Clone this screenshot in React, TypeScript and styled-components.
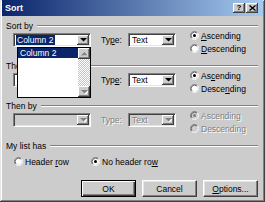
import styled, { createGlobalStyle } from 'styled-components'

const FACE = '#cccccc'
const NAVY = '#0a246a'

const GlobalStyle = createGlobalStyle`
  html, body {
    margin: 0;
    padding: 0;
    background: ${FACE};
  }
  body {
    font-family: "Liberation Sans", Arial, sans-serif;
    font-size: 8.5px;
    color: #000;
  }
`

const Window = styled.div`
  width: 265px;
  height: 202px;
  box-sizing: border-box;
  padding: 0 2px 2px 2px;
  background: ${FACE};
  box-shadow: inset -1px -1px #404040, inset 1px 1px #e4e4e4, inset -2px -2px #808080, inset 2px 2px #fff;
  display: flex;
  flex-direction: column;
`

const TitleBar = styled.div`
  height: 16px;
  flex: none;
  display: flex;
  align-items: center;
  justify-content: space-between;
  padding: 0 5px 0 3px;
  background: linear-gradient(to right, ${NAVY}, #a6caf0);
`

const TitleText = styled.span`
  color: #fff;
  font-weight: bold;
  font-size: 9px;
`

const TitleButtons = styled.div`
  display: flex;
  gap: 1px;
`

const TitleButton = styled.div`
  width: 12px;
  height: 10px;
  box-sizing: border-box;
  background: ${FACE};
  box-shadow: inset -1px -1px #404040, inset 1px 1px #fff, inset -2px -2px #808080;
  display: flex;
  align-items: center;
  justify-content: center;
  font-weight: bold;
  font-size: 8px;
  line-height: 1;
`

const Content = styled.div`
  display: flex;
  flex-direction: column;
  padding: 4px 5px 0 4px;
`

const Section = styled.div`
  display: flex;
  flex-direction: column;
`

const GroupHeader = styled.div`
  height: 12px;
  display: flex;
  align-items: center;
`

const GroupLine = styled.div`
  flex: 1;
  margin-left: 4px;
  border-top: 1px solid #808080;
  border-bottom: 1px solid #fff;
`

const Row = styled.div`
  height: 28px;
  display: flex;
  align-items: flex-start;
  padding-left: 7px;
`

const Field = styled.div`
  display: flex;
  align-items: center;
  margin-top: 1px;
`

const ComboWrap = styled.div`
  position: relative;
`

const Combo = styled.div<{ $width: number; $disabled?: boolean }>`
  width: ${(p) => p.$width}px;
  height: 14px;
  box-sizing: border-box;
  border: 1px solid;
  border-color: #808080 #fff #fff #808080;
  box-shadow: inset 1px 1px #404040, inset -1px -1px #e4e4e4;
  background: ${(p) => (p.$disabled ? FACE : '#fff')};
  display: flex;
  align-items: stretch;
  padding: 1px;
`

const ComboValue = styled.div<{ $disabled?: boolean }>`
  flex: 1;
  display: flex;
  align-items: center;
  padding-left: 2px;
  color: ${(p) => (p.$disabled ? '#808080' : '#000')};
  text-shadow: ${(p) => (p.$disabled ? '1px 1px #fff' : 'none')};
`

const Selected = styled.span`
  background: ${NAVY};
  color: #fff;
  align-self: stretch;
  display: flex;
  align-items: center;
  padding: 0 2px 0 1px;
  margin-left: -1px;
`

const DropButton = styled.div`
  width: 12px;
  flex: none;
  box-sizing: border-box;
  background: ${FACE};
  box-shadow: inset -1px -1px #404040, inset 1px 1px #fff, inset -2px -2px #808080;
  display: flex;
  align-items: center;
  justify-content: center;
`

const Label = styled.span<{ $disabled?: boolean; $width?: number; $offset?: number }>`
  width: ${(p) => (p.$width ? `${p.$width}px` : 'auto')};
  margin-left: ${(p) => p.$offset ?? 0}px;
  white-space: nowrap;
  color: ${(p) => (p.$disabled ? '#808080' : '#000')};
  text-shadow: ${(p) => (p.$disabled ? '1px 1px #fff' : 'none')};
`

const RadioColumn = styled.div`
  display: flex;
  flex-direction: column;
  margin-left: 14px;
  margin-top: -3px;
`

const RadioItem = styled.div<{ $width?: number }>`
  height: 13px;
  width: ${(p) => (p.$width ? `${p.$width}px` : 'auto')};
  display: flex;
  align-items: center;
  gap: 2px;
`

const RadioRow = styled.div`
  display: flex;
  align-items: center;
  margin-top: 3px;
  padding-left: 8px;
`

const ListBox = styled.div`
  position: absolute;
  left: 4px;
  top: 14px;
  width: 74px;
  height: 51px;
  box-sizing: border-box;
  border: 1px solid #000;
  background: #fff;
  display: flex;
  z-index: 2;
`

const ListItems = styled.div`
  flex: 1;
`

const ListItem = styled.div<{ $active?: boolean }>`
  height: 10px;
  display: flex;
  align-items: center;
  padding-left: 2px;
  background: ${(p) => (p.$active ? NAVY : 'transparent')};
  color: ${(p) => (p.$active ? '#fff' : '#000')};
`

const ScrollBar = styled.div`
  width: 12px;
  display: flex;
  flex-direction: column;
`

const ScrollTrack = styled.div`
  flex: 1;
  background: repeating-conic-gradient(#fff 0 25%, #c4c4c4 0 50%) 0 0 / 2px 2px;
`

const ScrollButton = styled(DropButton)`
  height: 11px;
`

const ButtonRow = styled.div`
  display: flex;
  justify-content: flex-end;
  gap: 6px;
  margin-top: 12px;
`

const PushButton = styled.button<{ $default?: boolean }>`
  width: 55px;
  height: 17px;
  box-sizing: border-box;
  padding: 0;
  font: inherit;
  color: #000;
  background: ${FACE};
  border: 1px solid;
  border-color: ${(p) => (p.$default ? '#000' : '#fff #404040 #404040 #fff')};
  box-shadow: ${(p) =>
    p.$default
      ? 'inset 1px 1px #fff, inset -1px -1px #404040, inset -2px -2px #808080'
      : 'inset -1px -1px #808080, inset 1px 1px #e4e4e4'};
`

const Arrow = ({ up, color = '#000' }: { up?: boolean; color?: string }) => (
  <svg width="7" height="4" viewBox="0 0 7 4" style={{ display: 'block' }}>
    {color !== '#000' && (
      <polygon points={up ? '1,4 8,4 4.5,0.5' : '1,1 8,1 4.5,4.5'} fill="#fff" />
    )}
    <polygon points={up ? '0,3.5 7,3.5 3.5,0' : '0,0 7,0 3.5,3.5'} fill={color} />
  </svg>
)

const Radio = ({ checked, disabled }: { checked?: boolean; disabled?: boolean }) => (
  <svg width="9" height="9" viewBox="0 0 12 12" style={{ display: 'block', flex: 'none' }}>
    <circle cx="6" cy="6" r="4.5" fill={disabled ? FACE : '#fff'} />
    <path d="M2.11 9.89 A5.5 5.5 0 0 1 9.89 2.11" fill="none" stroke="#808080" />
    <path d="M9.89 2.11 A5.5 5.5 0 0 1 2.11 9.89" fill="none" stroke="#fff" />
    <path d="M2.82 9.18 A4.5 4.5 0 0 1 9.18 2.82" fill="none" stroke="#404040" />
    <path d="M9.18 2.82 A4.5 4.5 0 0 1 2.82 9.18" fill="none" stroke="#e4e4e4" />
    {checked && <circle cx="6" cy="6" r="2" fill={disabled ? '#808080' : '#000'} />}
  </svg>
)

type SortRowProps = {
  title: string
  typeKey: number
  ascKey: number
  descKey: number
  first?: boolean
  disabled?: boolean
}

// underline the access key letter, none when disabled
const withKey = (text: string, idx: number, disabled?: boolean) =>
  disabled || idx < 0 ? (
    text
  ) : (
    <>
      {text.slice(0, idx)}
      <u>{text[idx]}</u>
      {text.slice(idx + 1)}
    </>
  )

const SortRow = ({ title, typeKey, ascKey, descKey, first, disabled }: SortRowProps) => (
  <Section>
    <GroupHeader>
      <Label>{title}</Label>
      <GroupLine />
    </GroupHeader>
    <Row>
      <Field>
        <ComboWrap>
          <Combo $width={78} $disabled={disabled}>
            <ComboValue>{first && <Selected>Column 2</Selected>}</ComboValue>
            <DropButton>
              <Arrow color={disabled ? '#808080' : '#000'} />
            </DropButton>
          </Combo>
          {first && (
            <ListBox>
              <ListItems>
                <ListItem $active>Column 2</ListItem>
              </ListItems>
              <ScrollBar>
                <ScrollButton>
                  <Arrow up color="#808080" />
                </ScrollButton>
                <ScrollTrack />
                <ScrollButton>
                  <Arrow color="#808080" />
                </ScrollButton>
              </ScrollBar>
            </ListBox>
          )}
        </ComboWrap>
        <Label $offset={10} $width={27} $disabled={disabled}>
          {withKey('Type:', typeKey, disabled)}
        </Label>
        <Combo $width={48} $disabled={disabled}>
          <ComboValue $disabled={disabled}>Text</ComboValue>
          <DropButton>
            <Arrow color={disabled ? '#808080' : '#000'} />
          </DropButton>
        </Combo>
      </Field>
      <RadioColumn>
        <RadioItem>
          <Radio checked disabled={disabled} />
          <Label $disabled={disabled}>{withKey('Ascending', ascKey, disabled)}</Label>
        </RadioItem>
        <RadioItem>
          <Radio disabled={disabled} />
          <Label $disabled={disabled}>{withKey('Descending', descKey, disabled)}</Label>
        </RadioItem>
      </RadioColumn>
    </Row>
  </Section>
)

export default function App() {
  return (
    <>
      <GlobalStyle />
      <Window>
        <TitleBar>
          <TitleText>Sort</TitleText>
          <TitleButtons>
            <TitleButton>?</TitleButton>
            <TitleButton>
              <svg width="7" height="6" viewBox="0 0 7 6">
                <path d="M0.5 0.5 L6.5 5.5 M6.5 0.5 L0.5 5.5" stroke="#000" strokeWidth="1.4" />
              </svg>
            </TitleButton>
          </TitleButtons>
        </TitleBar>
        <Content>
          <SortRow title="Sort by" typeKey={2} ascKey={0} descKey={0} first />
          <SortRow title="Then by" typeKey={3} ascKey={2} descKey={5} />
          <SortRow title="Then by" typeKey={-1} ascKey={-1} descKey={-1} disabled />
          <Section>
            <GroupHeader>
              <Label>My list has</Label>
              <GroupLine />
            </GroupHeader>
            <RadioRow>
              <RadioItem $width={77}>
                <Radio />
                <Label>{withKey('Header row', 7)}</Label>
              </RadioItem>
              <RadioItem>
                <Radio checked />
                <Label>{withKey('No header row', 12)}</Label>
              </RadioItem>
            </RadioRow>
            <ButtonRow>
              <PushButton $default>OK</PushButton>
              <PushButton>Cancel</PushButton>
              <PushButton>{withKey('Options...', 0)}</PushButton>
            </ButtonRow>
          </Section>
        </Content>
      </Window>
    </>
  )
}
